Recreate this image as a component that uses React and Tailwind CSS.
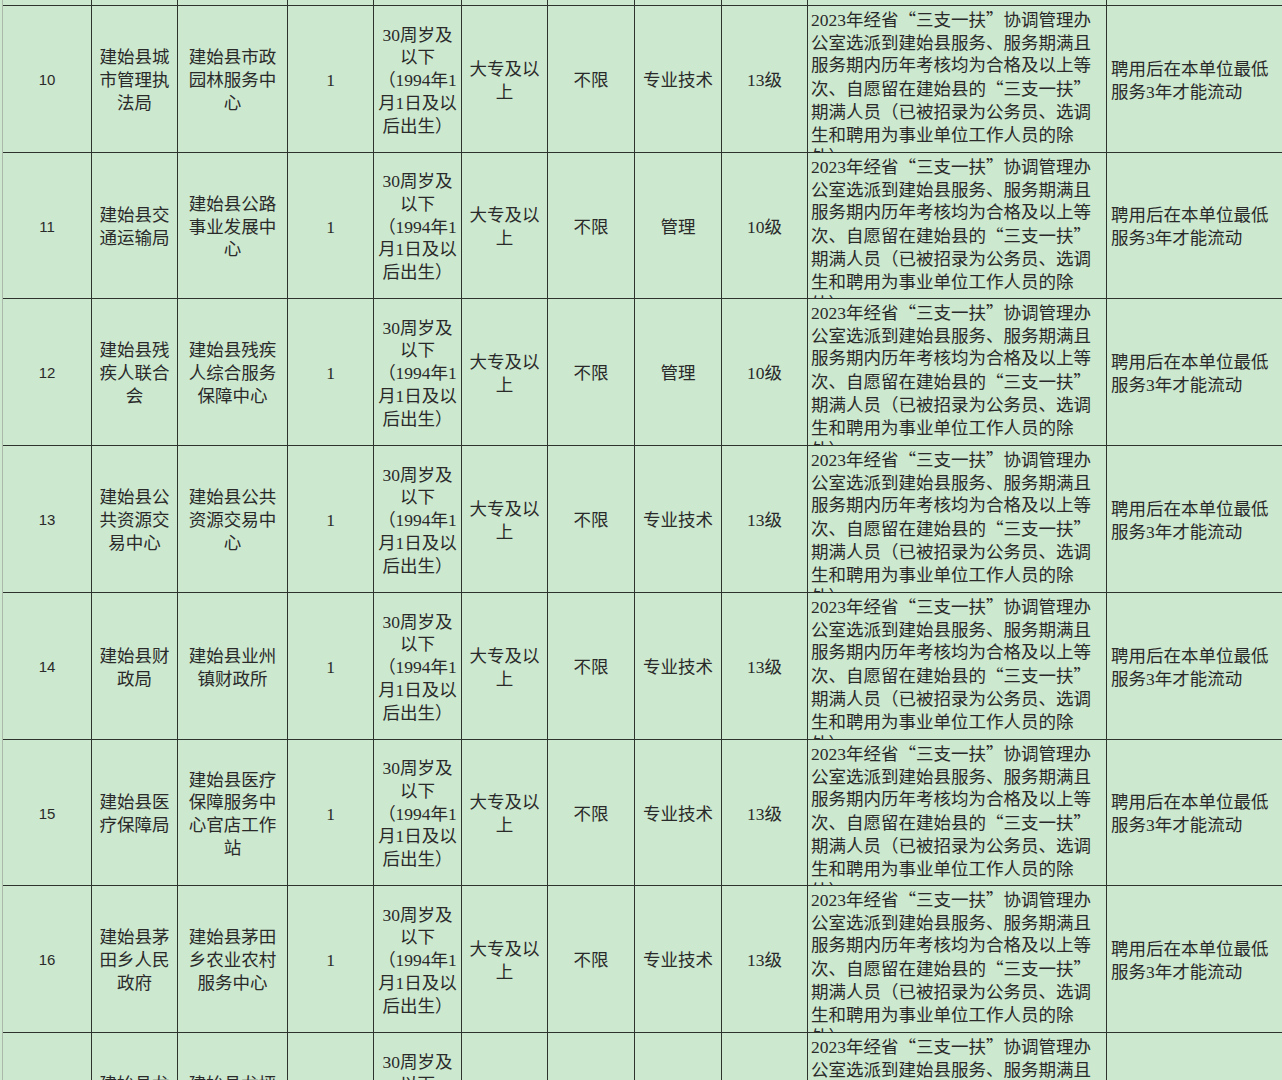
import React from 'react';

const req = [
    '2023年经省“三支一扶”协调管理办',
    '公室选派到建始县服务、服务期满且',
    '服务期内历年考核均为合格及以上等',
    '次、自愿留在建始县的“三支一扶”',
    '期满人员（已被招录为公务员、选调',
    '生和聘用为事业单位工作人员的除',
    '外）',
];
const age = ['30周岁及', '以下', '（1994年1', '月1日及以', '后出生）'];
const note = ['聘用后在本单位最低', '服务3年才能流动'];

const rows = [
    { no: '10', dept: ['建始县城', '市管理执', '法局'], unit: ['建始县市政', '园林服务中', '心'], type: '专业技术', level: '13级', h: 'h-[147px]' },
    { no: '11', dept: ['建始县交', '通运输局'], unit: ['建始县公路', '事业发展中', '心'], type: '管理', level: '10级', h: 'h-[146px]' },
    { no: '12', dept: ['建始县残', '疾人联合', '会'], unit: ['建始县残疾', '人综合服务', '保障中心'], type: '管理', level: '10级', h: 'h-[147px]' },
    { no: '13', dept: ['建始县公', '共资源交', '易中心'], unit: ['建始县公共', '资源交易中', '心'], type: '专业技术', level: '13级', h: 'h-[147px]' },
    { no: '14', dept: ['建始县财', '政局'], unit: ['建始县业州', '镇财政所'], type: '专业技术', level: '13级', h: 'h-[147px]' },
    { no: '15', dept: ['建始县医', '疗保障局'], unit: ['建始县医疗', '保障服务中', '心官店工作', '站'], type: '专业技术', level: '13级', h: 'h-[146px]' },
    { no: '16', dept: ['建始县茅', '田乡人民', '政府'], unit: ['建始县茅田', '乡农业农村', '服务中心'], type: '专业技术', level: '13级', h: 'h-[147px]' },
    { no: '17', dept: ['建始县龙', '坪乡人民', '政府'], unit: ['建始县龙坪', '乡农业农村', '服务中心'], type: '专业技术', level: '13级', h: 'h-[147px]' },
];

// quotes need the CJK font so they come out full width
const Line = ({ text }) => {
    const parts = text.split(/([“”])/);
    return (
        <div className="whitespace-nowrap">
            {parts.map((p, i) =>
                p === '“' || p === '”'
                    ? <span key={i} className="font-['Noto_Sans_CJK_SC',sans-serif]">{p}</span>
                    : <span key={i}>{p}</span>
            )}
        </div>
    );
};

const Lines = ({ lines }) => lines.map((l, i) => <Line key={i} text={l} />);

const cell = 'border-r border-b border-[#2e332e] overflow-hidden';
const mid = `${cell} flex flex-col items-center justify-center text-center pt-[3px]`;

const App = () => {
    return (
        <div className="h-[1080px] w-[1282px] overflow-hidden bg-[#cce8cf] pl-[2px] text-[17.5px] leading-[22.7px] text-[#2a2a2a] font-['Liberation_Serif','Noto_Sans_CJK_SC',serif]">
            <div className="border-l border-[#aab8aa]">
                <div className="grid h-[6px] grid-cols-[89px_86px_110px_86px_88px_86px_87px_87px_86px_299px_1fr] border-b border-[#2e332e]">
                    {Array.from({ length: 11 }).map((_, i) => (
                        <div key={i} className={i < 10 ? 'border-r border-[#2e332e]' : ''} />
                    ))}
                </div>
                {rows.map((r) => (
                    <div key={r.no} className={`grid ${r.h} grid-cols-[89px_86px_110px_86px_88px_86px_87px_87px_86px_299px_1fr]`}>
                        <div className={`${mid} font-['Liberation_Sans',sans-serif] text-[15px]`}>{r.no}</div>
                        <div className={mid}><Lines lines={r.dept} /></div>
                        <div className={mid}><Lines lines={r.unit} /></div>
                        <div className={mid}>1</div>
                        <div className={mid}><Lines lines={age} /></div>
                        <div className={mid}><Lines lines={['大专及以', '上']} /></div>
                        <div className={mid}>不限</div>
                        <div className={mid}>{r.type}</div>
                        <div className={mid}>{r.level}</div>
                        <div className={`${cell} pl-[3px] pt-[2px]`}><Lines lines={req} /></div>
                        <div className={`border-b border-[#2e332e] overflow-hidden flex flex-col justify-center pl-[4px] pt-[3px]`}>
                            {r.no !== '17' && <Lines lines={note} />}
                        </div>
                    </div>
                ))}
            </div>
        </div>
    );
};

export default App;
